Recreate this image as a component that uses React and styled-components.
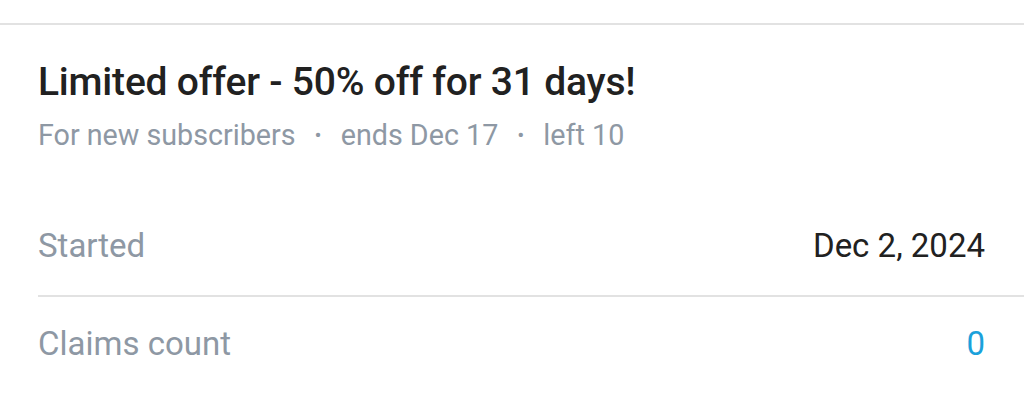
import React from "react";
import styled, { createGlobalStyle } from "styled-components";

const GlobalStyle = createGlobalStyle`
    body {
        margin: 0;
        background: #fff;
        font-family: Roboto, "Liberation Sans", sans-serif;
    }
`;

const Page = styled.div`
    width: 1024px;
    height: 407px;
    overflow: hidden;
    background: #fff;
`;

const TopRule = styled.div`
    margin-top: 23px;
    height: 2px;
    background: #e2e2e2;
`;

const Card = styled.div`
    padding: 33px 0 0 38px;
`;

const Title = styled.h2`
    margin: 0;
    font-size: 39px;
    font-weight: 500;
    color: #212121;
    line-height: 48px;
    letter-spacing: -0.2px;
`;

const Meta = styled.div`
    display: flex;
    align-items: center;
    gap: 19px;
    margin-top: 11px;
    font-size: 28.7px;
    line-height: 36px;
    color: #8e98a4;
`;

const Dot = styled.span`
    font-size: 21px;
`;

const Rows = styled.div`
    margin-top: 42px;
`;

const Row = styled.div`
    display: flex;
    justify-content: space-between;
    align-items: center;
    height: ${(p) => (p.last ? "92px" : "100px")};
    padding-right: 39px;
    border-bottom: ${(p) => (p.last ? "none" : "2px solid #e2e2e2")};
`;

const Label = styled.span`
    font-size: 33px;
    color: #8e98a4;
`;

const Value = styled.span`
    font-size: 33px;
    color: ${(p) => p.color || "#212121"};
`;

const App = () => {
    const meta = ["For new subscribers", "ends Dec 17", "left 10"];
    return (
        <Page>
            <GlobalStyle />
            <TopRule />
            <Card>
                <Title>Limited offer - 50% off for 31 days!</Title>
                <Meta>
                    {meta.map((m, i) => (
                        <React.Fragment key={m}>
                            {i > 0 && <Dot>•</Dot>}
                            <span>{m}</span>
                        </React.Fragment>
                    ))}
                </Meta>
                <Rows>
                    <Row>
                        <Label>Started</Label>
                        <Value>Dec 2, 2024</Value>
                    </Row>
                    <Row last>
                        <Label>Claims count</Label>
                        <Value color="#1ba1db">0</Value>
                    </Row>
                </Rows>
            </Card>
        </Page>
    );
};

export default App;
